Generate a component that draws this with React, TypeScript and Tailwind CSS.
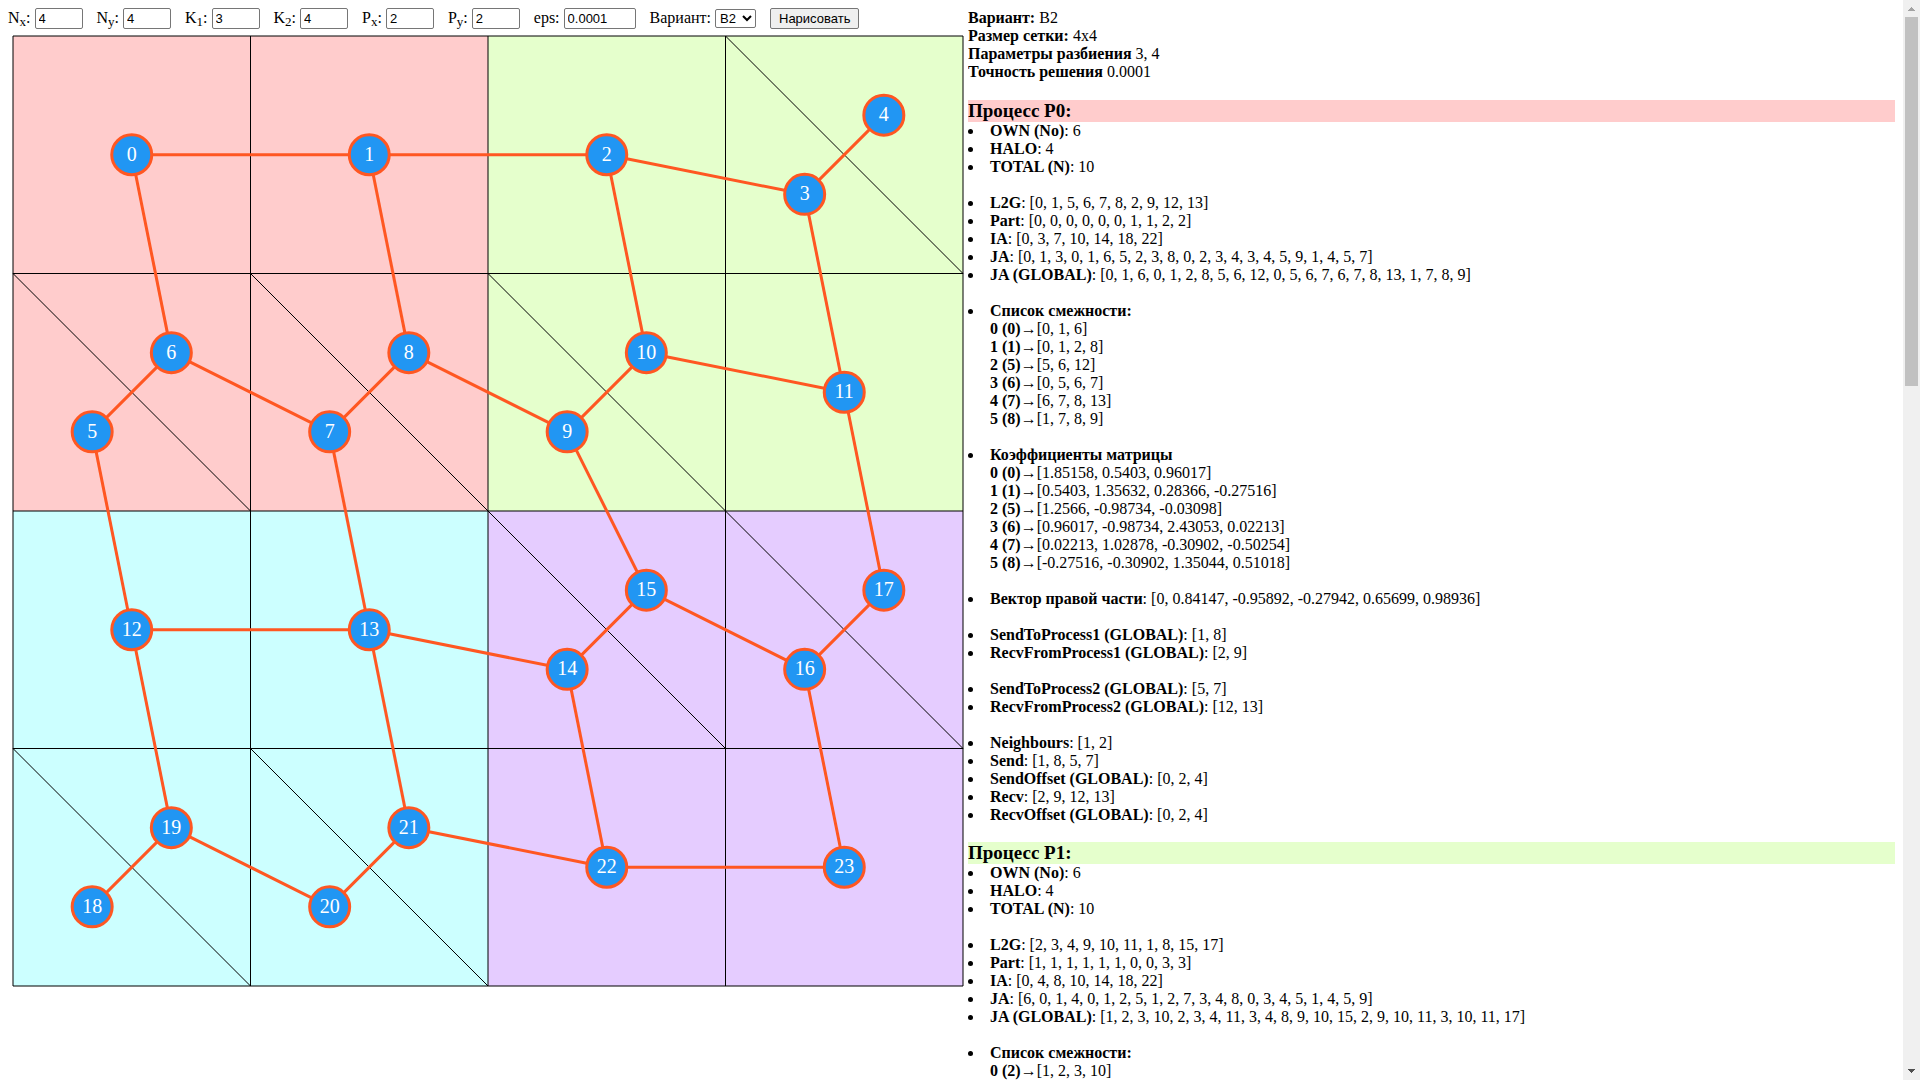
import React from "react";

const CELL = 237.5;
const N = 4;
const K1 = 3;
const K2 = 4;

const PROCESS_FILL = ["#ffcccc", "#e5ffcc", "#ccffff", "#e5ccff"];

type Point = { x: number; y: number };
type Cell = { split: boolean; lowerLeft: number; upperRight: number };

/** Numbers the elements row by row: K1 squares, then K2 squares cut in two triangles, and so on. */
function buildMesh() {
  const nodes: Point[] = [];
  const cells: Cell[][] = [];
  const edges: [number, number][] = [];

  for (let row = 0; row < N; row++) {
    cells.push([]);
    for (let col = 0; col < N; col++) {
      const split = (row * N + col) % (K1 + K2) >= K1;
      const first = nodes.length;
      const x = col * CELL;
      const y = row * CELL;
      if (split) {
        nodes.push({ x: x + CELL / 3, y: y + (2 * CELL) / 3 });
        nodes.push({ x: x + (2 * CELL) / 3, y: y + CELL / 3 });
        edges.push([first, first + 1]);
      } else {
        nodes.push({ x: x + CELL / 2, y: y + CELL / 2 });
      }
      const cell = { split, lowerLeft: first, upperRight: split ? first + 1 : first };
      cells[row].push(cell);
      if (col > 0) edges.push([cells[row][col - 1].upperRight, cell.lowerLeft]);
      if (row > 0) edges.push([cells[row - 1][col].lowerLeft, cell.upperRight]);
    }
  }
  return { nodes, cells, edges };
}

const mesh = buildMesh();

function MeshView() {
  const size = CELL * N;
  const half = size / 2;
  const steps = [0, 1, 2, 3, 4];
  return (
    <svg viewBox="-5 -5 960 960" className="block w-full" role="img" aria-label="Сетка">
      {PROCESS_FILL.map((fill, i) => (
        <rect key={fill} x={(i % 2) * half} y={Math.floor(i / 2) * half} width={half} height={half} fill={fill} />
      ))}
      <g stroke="black" strokeWidth={1}>
        {steps.map((i) => (
          <line key={`h${i}`} x1={0} y1={i * CELL} x2={size} y2={i * CELL} />
        ))}
        {steps.map((i) => (
          <line key={`v${i}`} x1={i * CELL} y1={0} x2={i * CELL} y2={size} />
        ))}
        {mesh.cells.map((line, row) =>
          line.map((cell, col) =>
            cell.split ? (
              <line
                key={`d${row}-${col}`}
                x1={col * CELL}
                y1={row * CELL}
                x2={(col + 1) * CELL}
                y2={(row + 1) * CELL}
              />
            ) : null
          )
        )}
      </g>
      <g stroke="#ff5722" strokeWidth={3}>
        {mesh.edges.map(([a, b]) => (
          <line
            key={`${a}-${b}`}
            x1={mesh.nodes[a].x}
            y1={mesh.nodes[a].y}
            x2={mesh.nodes[b].x}
            y2={mesh.nodes[b].y}
          />
        ))}
      </g>
      {mesh.nodes.map((p, i) => (
        <g key={i}>
          <circle cx={p.x} cy={p.y} r={20} fill="#2196f3" stroke="#ff5722" strokeWidth={3} />
          <text x={p.x} y={p.y + 6} fill="white" fontSize={20} textAnchor="middle">
            {i}
          </text>
        </g>
      ))}
    </svg>
  );
}

const FIELDS = [
  { id: "nx", base: "N", sub: "x", value: "4" },
  { id: "ny", base: "N", sub: "y", value: "4" },
  { id: "k1", base: "K", sub: "1", value: "3" },
  { id: "k2", base: "K", sub: "2", value: "4" },
  { id: "px", base: "P", sub: "x", value: "2" },
  { id: "py", base: "P", sub: "y", value: "2" },
];

const CONTROL = "rounded-[2px] border border-[#767676] font-['Liberation_Sans',Arial,sans-serif] text-[13px]";

function Toolbar() {
  return (
    <form className="flex h-[23px] items-start gap-[14px] whitespace-nowrap" onSubmit={(e) => e.preventDefault()}>
      {FIELDS.map((f) => (
        <div key={f.id} className="flex items-start gap-1">
          <label htmlFor={f.id} className="leading-[20px]">
            {f.base}
            <sub className="text-[13px]">{f.sub}</sub>:
          </label>
          <input id={f.id} defaultValue={f.value} className={`${CONTROL} h-[21px] w-[48px] bg-white px-[3px]`} />
        </div>
      ))}
      <div className="flex items-start gap-1">
        <label htmlFor="eps" className="leading-[20px]">
          eps:
        </label>
        <input id="eps" defaultValue="0.0001" className={`${CONTROL} h-[21px] w-[72px] bg-white px-[3px]`} />
      </div>
      <div className="flex items-start gap-1">
        <label htmlFor="variant" className="leading-[20px]">
          Вариант:
        </label>
        <select id="variant" defaultValue="B2" className={`${CONTROL} mt-px h-[19px] w-[41px] bg-white`}>
          <option>B2</option>
        </select>
      </div>
      <button type="submit" className={`${CONTROL} h-[21px] bg-[#efefef] px-2`}>
        Нарисовать
      </button>
    </form>
  );
}

type Item = { name: string; value?: string; rows?: [string, string][] };
type Process = { title: string; tone: string; groups: Item[][] };

const PROCESSES: Process[] = [
  {
    title: "Процесс P0:",
    tone: "bg-[#ffcccc]",
    groups: [
      [
        { name: "OWN (No)", value: "6" },
        { name: "HALO", value: "4" },
        { name: "TOTAL (N)", value: "10" },
      ],
      [
        { name: "L2G", value: "[0, 1, 5, 6, 7, 8, 2, 9, 12, 13]" },
        { name: "Part", value: "[0, 0, 0, 0, 0, 0, 1, 1, 2, 2]" },
        { name: "IA", value: "[0, 3, 7, 10, 14, 18, 22]" },
        { name: "JA", value: "[0, 1, 3, 0, 1, 6, 5, 2, 3, 8, 0, 2, 3, 4, 3, 4, 5, 9, 1, 4, 5, 7]" },
        { name: "JA (GLOBAL)", value: "[0, 1, 6, 0, 1, 2, 8, 5, 6, 12, 0, 5, 6, 7, 6, 7, 8, 13, 1, 7, 8, 9]" },
      ],
      [
        {
          name: "Список смежности:",
          rows: [
            ["0 (0)", "[0, 1, 6]"],
            ["1 (1)", "[0, 1, 2, 8]"],
            ["2 (5)", "[5, 6, 12]"],
            ["3 (6)", "[0, 5, 6, 7]"],
            ["4 (7)", "[6, 7, 8, 13]"],
            ["5 (8)", "[1, 7, 8, 9]"],
          ],
        },
      ],
      [
        {
          name: "Коэффициенты матрицы",
          rows: [
            ["0 (0)", "[1.85158, 0.5403, 0.96017]"],
            ["1 (1)", "[0.5403, 1.35632, 0.28366, -0.27516]"],
            ["2 (5)", "[1.2566, -0.98734, -0.03098]"],
            ["3 (6)", "[0.96017, -0.98734, 2.43053, 0.02213]"],
            ["4 (7)", "[0.02213, 1.02878, -0.30902, -0.50254]"],
            ["5 (8)", "[-0.27516, -0.30902, 1.35044, 0.51018]"],
          ],
        },
      ],
      [{ name: "Вектор правой части", value: "[0, 0.84147, -0.95892, -0.27942, 0.65699, 0.98936]" }],
      [
        { name: "SendToProcess1 (GLOBAL)", value: "[1, 8]" },
        { name: "RecvFromProcess1 (GLOBAL)", value: "[2, 9]" },
      ],
      [
        { name: "SendToProcess2 (GLOBAL)", value: "[5, 7]" },
        { name: "RecvFromProcess2 (GLOBAL)", value: "[12, 13]" },
      ],
      [
        { name: "Neighbours", value: "[1, 2]" },
        { name: "Send", value: "[1, 8, 5, 7]" },
        { name: "SendOffset (GLOBAL)", value: "[0, 2, 4]" },
        { name: "Recv", value: "[2, 9, 12, 13]" },
        { name: "RecvOffset (GLOBAL)", value: "[0, 2, 4]" },
      ],
    ],
  },
  {
    title: "Процесс P1:",
    tone: "bg-[#e5ffcc]",
    groups: [
      [
        { name: "OWN (No)", value: "6" },
        { name: "HALO", value: "4" },
        { name: "TOTAL (N)", value: "10" },
      ],
      [
        { name: "L2G", value: "[2, 3, 4, 9, 10, 11, 1, 8, 15, 17]" },
        { name: "Part", value: "[1, 1, 1, 1, 1, 1, 0, 0, 3, 3]" },
        { name: "IA", value: "[0, 4, 8, 10, 14, 18, 22]" },
        { name: "JA", value: "[6, 0, 1, 4, 0, 1, 2, 5, 1, 2, 7, 3, 4, 8, 0, 3, 4, 5, 1, 4, 5, 9]" },
        { name: "JA (GLOBAL)", value: "[1, 2, 3, 10, 2, 3, 4, 11, 3, 4, 8, 9, 10, 15, 2, 9, 10, 11, 3, 10, 11, 17]" },
      ],
      [{ name: "Список смежности:", rows: [["0 (2)", "[1, 2, 3, 10]"]] }],
    ],
  },
];

function ListItem({ item }: { item: Item }) {
  return (
    <li className="flex before:mt-[7px] before:mr-[17px] before:size-[5px] before:shrink-0 before:rounded-full before:bg-black">
      <div>
        <b>{item.name}</b>
        {item.value !== undefined && <>: {item.value}</>}
        {item.rows?.map(([name, value]) => (
          <p key={name}>
            <b>{name}</b>→{value}
          </p>
        ))}
      </div>
    </li>
  );
}

function Report() {
  return (
    <section className="min-w-0 flex-1 overflow-hidden pt-[9px] leading-[18px]">
      <div className="mb-[19px]">
        <p>
          <b>Вариант:</b> B2
        </p>
        <p>
          <b>Размер сетки:</b> 4x4
        </p>
        <p>
          <b>Параметры разбиения</b> 3, 4
        </p>
        <p>
          <b>Точность решения</b> 0.0001
        </p>
      </div>
      {PROCESSES.map((p) => (
        <article key={p.title} className="mb-[18px]">
          <h3 className={`text-[19px] leading-[22px] font-bold ${p.tone}`}>{p.title}</h3>
          <div className="flex flex-col gap-[18px]">
            {p.groups.map((group, i) => (
              <ul key={i}>
                {group.map((item) => (
                  <ListItem key={item.name} item={item} />
                ))}
              </ul>
            ))}
          </div>
        </article>
      ))}
    </section>
  );
}

function ScrollTrack() {
  return (
    <div className="flex w-[17px] shrink-0 flex-col bg-[#f0f0f0]" aria-hidden="true">
      <svg viewBox="0 0 17 17" className="size-[17px] shrink-0" shapeRendering="crispEdges" fill="#a3a3a3">
        <path d="M8 7h1v1h1v1h1v1h1v1H5v-1h1V9h1V8h1z" />
      </svg>
      <div className="mx-[2px] min-h-0 flex-1">
        <div className="h-[35.3%] bg-[#c1c1c1]" />
      </div>
      <svg viewBox="0 0 17 17" className="size-[17px] shrink-0" shapeRendering="crispEdges" fill="#505050">
        <path d="M5 6h7v1h-1v1h-1v1H9v1H8V9H7V8H6V7H5z" />
      </svg>
    </div>
  );
}

export default function App() {
  return (
    <div className="flex h-screen overflow-hidden bg-white font-['Liberation_Serif','Times_New_Roman',serif] text-[16px] text-black">
      <main className="flex min-w-0 flex-1 px-2">
        <section className="w-[50vw] shrink-0 pt-2">
          <Toolbar />
          <MeshView />
        </section>
        <Report />
      </main>
      <ScrollTrack />
    </div>
  );
}
